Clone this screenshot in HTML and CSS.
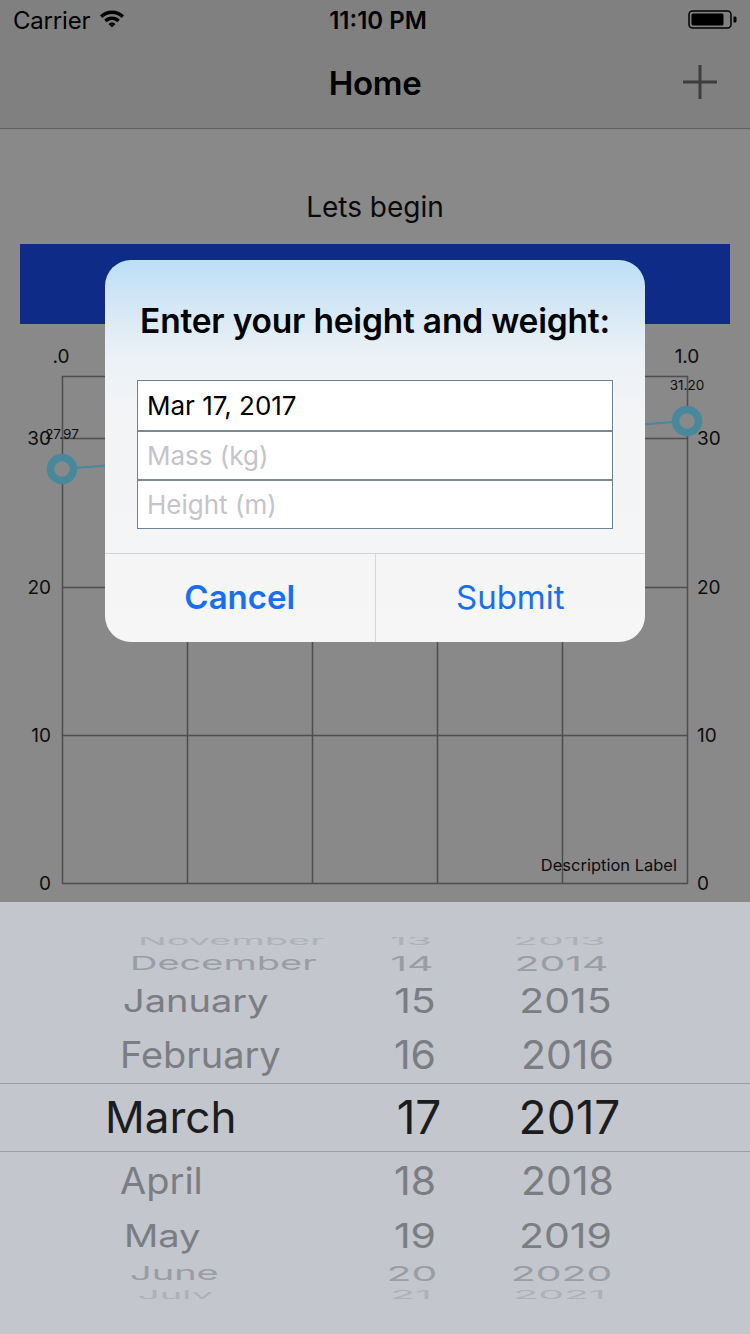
FILE: index.html
```html
<!DOCTYPE html>
<html lang="en">
<head>
<meta charset="utf-8">
<title>Home</title>
<link rel="stylesheet" href="styles.css">
</head>
<body>
<div class="screen">
  <header class="status">
    <div class="status-left">
      <span class="carrier">Carrier</span>
      <svg class="wifi" viewBox="0 0 24 18" width="24" height="18">
        <path d="M0,5.48 A17,17 0 0 1 24,5.48 L21.54,7.96 A13.5,13.5 0 0 0 2.46,7.96 Z"/>
        <path d="M4.22,9.72 A11,11 0 0 1 19.78,9.72 L17.3,12.2 A7.5,7.5 0 0 0 6.7,12.2 Z"/>
        <path d="M12,17.5 L8.46,13.96 A5,5 0 0 1 15.54,13.96 Z"/>
      </svg>
    </div>
    <span class="time">11:10 PM</span>
    <div class="status-right">
      <svg class="battery" viewBox="0 0 50 20" width="50" height="20">
        <rect x="1" y="1" width="42" height="17" rx="3.5" fill="none" stroke="#000" stroke-width="1.5"/>
        <rect x="3.5" y="3.5" width="32" height="12" rx="1.5" fill="#000"/>
        <path d="M45.5,6.5 h1.5 a1.5,1.5 0 0 1 1.5,1.5 v3 a1.5,1.5 0 0 1 -1.5,1.5 h-1.5 Z" fill="#000"/>
      </svg>
    </div>
  </header>

  <nav class="navbar">
    <span></span>
    <h1 class="nav-title">Home</h1>
    <svg class="plus" viewBox="0 0 34 34" width="34" height="34">
      <path d="M17,0 V34 M0,17 H34" stroke="#3d3d3d" stroke-width="3" fill="none"/>
    </svg>
  </nav>

  <main class="content">
    <h2 class="lead">Lets begin</h2>
    <div class="banner"></div>
    <svg class="chart" viewBox="0 0 750 578" width="750" height="578">
      <g class="grid">
        <line x1="62.5" y1="52" x2="62.5" y2="559.5"/>
        <line x1="187.5" y1="52" x2="187.5" y2="559.5"/>
        <line x1="312.5" y1="52" x2="312.5" y2="559.5"/>
        <line x1="437.5" y1="52" x2="437.5" y2="559.5"/>
        <line x1="562.5" y1="52" x2="562.5" y2="559.5"/>
        <line x1="687.5" y1="52" x2="687.5" y2="559.5"/>
        <line x1="62" y1="52.5" x2="688" y2="52.5"/>
        <line x1="62" y1="114.5" x2="688" y2="114.5"/>
        <line x1="62" y1="263.5" x2="688" y2="263.5"/>
        <line x1="62" y1="411.5" x2="688" y2="411.5"/>
        <line x1="62" y1="559.5" x2="688" y2="559.5"/>
      </g>
      <g class="axis">
        <text x="61" y="39" text-anchor="middle">.0</text>
        <text x="687" y="39" text-anchor="middle">1.0</text>
        <text x="687" y="66" text-anchor="middle" class="val">31.20</text>
        <text x="62" y="115" text-anchor="middle" class="val">27.97</text>
        <text x="51" y="121" text-anchor="end">30</text>
        <text x="51" y="270" text-anchor="end">20</text>
        <text x="51" y="418" text-anchor="end">10</text>
        <text x="51" y="566" text-anchor="end">0</text>
        <text x="697" y="121">30</text>
        <text x="697" y="270">20</text>
        <text x="697" y="418">10</text>
        <text x="697" y="566">0</text>
        <text x="677" y="547" text-anchor="end" class="desc">Description Label</text>
      </g>
      <g class="series">
        <line x1="62" y1="145" x2="687" y2="97" class="link"/>
        <circle cx="62" cy="145" r="11.5" class="dot"/>
        <circle cx="687" cy="97" r="11.5" class="dot"/>
      </g>
    </svg>
  </main>

  <section class="picker">
    <div class="row r4 top">
      <span class="m">November</span><span class="d">13</span><span class="y">2013</span>
    </div>
    <div class="row r3">
      <span class="m">December</span><span class="d">14</span><span class="y">2014</span>
    </div>
    <div class="row r2">
      <span class="m">January</span><span class="d">15</span><span class="y">2015</span>
    </div>
    <div class="row r1">
      <span class="m">February</span><span class="d">16</span><span class="y">2016</span>
    </div>
    <div class="row sel">
      <span class="m">March</span><span class="d">17</span><span class="y">2017</span>
    </div>
    <div class="row r1 below">
      <span class="m">April</span><span class="d">18</span><span class="y">2018</span>
    </div>
    <div class="row r2 below">
      <span class="m">May</span><span class="d">19</span><span class="y">2019</span>
    </div>
    <div class="row r3 below">
      <span class="m">June</span><span class="d">20</span><span class="y">2020</span>
    </div>
    <div class="row r4 bottom">
      <span class="m">July</span><span class="d">21</span><span class="y">2021</span>
    </div>
  </section>

  <div class="alert">
    <h3 class="alert-title">Enter your height and weight:</h3>
    <div class="fields">
      <div class="field">Mar 17, 2017</div>
      <div class="field placeholder">Mass (kg)</div>
      <div class="field placeholder">Height (m)</div>
    </div>
    <div class="actions">
      <span class="action cancel">Cancel</span>
      <span class="action submit">Submit</span>
    </div>
  </div>
</div>
</body>
</html>
```
FILE: styles.css
```css
* { box-sizing: border-box; }
html, body { margin: 0; padding: 0; }
body {
  width: 750px;
  height: 1334px;
  overflow: hidden;
  font-family: Inter, "Noto Sans", "Liberation Sans", sans-serif;
  background: #898989;
}
.screen {
  position: relative;
  width: 750px;
  height: 1334px;
  display: flex;
  flex-direction: column;
}

/* status bar */
.status {
  height: 40px;
  flex: none;
  background: #808080;
  display: grid;
  grid-template-columns: 1fr auto 1fr;
  align-items: center;
  color: #000;
}
.status-left {
  display: flex;
  align-items: center;
  gap: 10px;
  padding-left: 13px;
}
.carrier { font-size: 24px; letter-spacing: -0.2px; }
.wifi { fill: #000; margin-top: -2px; }
.time { font-size: 24px; font-weight: 600; letter-spacing: 0; padding-left: 6px; }
.status-right {
  display: flex;
  justify-content: flex-end;
  padding-right: 12px;
}

/* nav */
.navbar {
  height: 89px;
  flex: none;
  background: #808080;
  border-bottom: 1px solid #5f5f5f;
  display: grid;
  grid-template-columns: 1fr auto 1fr;
  align-items: center;
}
.nav-title {
  margin: 0;
  font-size: 33px;
  font-weight: 600;
  color: #000;
  letter-spacing: -0.3px;
  padding-bottom: 2px;
}
.plus {
  justify-self: end;
  margin-right: 33px;
  margin-bottom: 4px;
}

/* content */
.content {
  flex: 1;
  overflow: hidden;
  display: flex;
  flex-direction: column;
  align-items: stretch;
}
.lead {
  margin: 62px 0 0;
  height: 32px;
  line-height: 32px;
  text-align: center;
  font-size: 28px;
  font-weight: 400;
  color: #0a0a0a;
}
.banner {
  margin: 21px 20px 0;
  height: 80px;
  background: #0f2b88;
}
.chart { display: block; flex: none; }
.grid line { stroke: #4e4e4e; stroke-width: 1.5; }
.axis text {
  font-family: Inter, "Noto Sans", sans-serif;
  font-size: 19px;
  fill: #0d0d0d;
}
.axis .val { font-size: 13.5px; }
.axis .desc { font-size: 16.5px; }
.series .link { stroke: #47889b; stroke-width: 2; }
.series .dot { fill: #898989; stroke: #47889b; stroke-width: 7.5; }

/* picker */
.picker {
  height: 432px;
  flex: none;
  background: #c3c6cd;
  padding-top: 35px;
  color: #7b7d82;
}
.row {
  display: grid;
  grid-template-columns: 370px 90px 215px;
  grid-template-rows: 100%;
  align-items: center;
  overflow: hidden;
  font-size: 38px;
}
.row span { display: block; white-space: nowrap; }
.row .d, .row .y { text-align: center; font-size: 41px; }
.row .m { justify-self: start; }

.r4 { height: 15px; line-height: 15px; color: #aeb1b7; }
.r4 span { transform: translateY(-4px) scaleY(0.3); }
.r4 .m { margin-left: 138px; }
.r4 .d { transform: translate(-4px, -4px) scaleY(0.3); }
.r4 .y { transform: translate(-8px, -4px) scaleY(0.3); }
.r4.bottom span { transform: translateY(3px) scaleY(0.3); }
.r4.bottom .d { transform: translate(-4px, 3px) scaleY(0.3); }
.r4.bottom .y { transform: translate(-8px, 3px) scaleY(0.3); }

.r3 { height: 22px; line-height: 22px; color: #9a9da3; }
.r3 span { transform: scaleY(0.5); }
.r3 .m { margin-left: 130px; }
.r3 .d { transform: translateX(-3px) scaleY(0.5); }
.r3 .y { transform: translateX(-6px) scaleY(0.5); }

.r2 { height: 54px; line-height: 54px; }
.r2 span { transform: scaleY(0.82); }
.r2 .m { margin-left: 123px; }
.r2 .y { transform: translateX(-2px) scaleY(0.82); }
.r2.below { height: 52px; line-height: 52px; }
.r2.below .m { margin-left: 124px; }

.r1 { height: 55px; line-height: 55px; }
.r1 span { transform: scaleY(0.95); }
.r1 .m { margin-left: 120px; }
.r1.below { height: 58px; line-height: 58px; }

.sel {
  height: 69px;
  line-height: 67px;
  border-top: 1px solid #9b9ea4;
  border-bottom: 1px solid #9b9ea4;
  color: #1c1c1e;
  font-size: 44px;
}
.sel .m { margin-left: 105px; }
.sel .d, .sel .y { font-size: 46px; }
.sel .d { transform: translateX(4px); }
.sel .y { transform: translateX(2px); }

/* alert */
.alert {
  position: absolute;
  left: 105px;
  top: 260px;
  width: 540px;
  height: 382px;
  border-radius: 26px;
  overflow: hidden;
  background: linear-gradient(to bottom, #bcdff6 0px, #d6e8f5 50px, #ebf1f6 95px, #f3f4f6 150px, #f6f6f6 100%);
  display: flex;
  flex-direction: column;
}
.alert-title {
  margin: 41px 0 0;
  height: 40px;
  line-height: 40px;
  text-align: center;
  font-size: 33.5px;
  font-weight: 600;
  letter-spacing: -0.2px;
  color: #000;
}
.fields {
  margin: 39px 32px 0;
  border: 1px solid #6a8494;
  background: #fff;
}
.field {
  height: 49px;
  padding-left: 9px;
  display: flex;
  align-items: center;
  font-size: 26px;
  color: #000;
}
.field + .field { border-top: 2px solid #7b8a8d; height: 49px; }
.field.placeholder { color: #c4c4ca; }
.actions {
  margin-top: 24px;
  flex: 1;
  display: flex;
  border-top: 1px solid #d3d3d5;
}
.action {
  flex: 1;
  display: flex;
  align-items: center;
  justify-content: center;
  font-size: 33px;
  color: #1670f7;
  padding-bottom: 2px;
}
.cancel { font-weight: 600; border-right: 1px solid #d6d6d8; }
.submit { font-weight: 400; }
```
